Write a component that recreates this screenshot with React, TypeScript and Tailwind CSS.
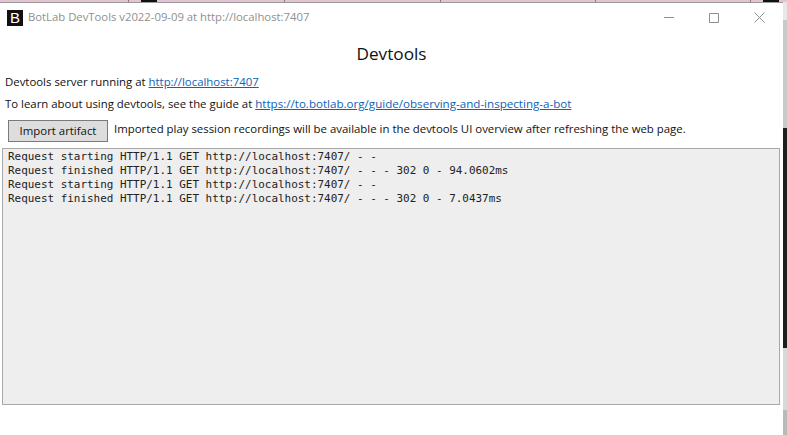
import React from "react";

const logLines = [
  "Request starting HTTP/1.1 GET http://localhost:7407/ - -",
  "Request finished HTTP/1.1 GET http://localhost:7407/ - - - 302 0 - 94.0602ms",
  "Request starting HTTP/1.1 GET http://localhost:7407/ - -",
  "Request finished HTTP/1.1 GET http://localhost:7407/ - - - 302 0 - 7.0437ms",
];

const linkClass = "text-[#0f62b5] underline";

// bits of the window behind this one, showing along the top edge
const TopStrip = () => (
  <div className="flex h-[2px] w-full bg-[#e5c4d2]">
    <div className="h-full w-[129px] border-r border-[#8a7a80]" />
    <div className="h-full w-[12px]" />
    <div className="h-full w-[16px] bg-[#111]" />
    <div className="h-full w-[128px] border-r border-[#8a7a80]" />
    <div className="h-full w-[156px] border-r border-[#8a7a80]" />
    <div className="h-full w-[155px] border-r border-[#8a7a80]" />
    <div className="h-full w-[155px] border-r border-[#8a7a80]" />
    <div className="h-full w-[12px]" />
    <div className="h-full w-[16px] bg-[#111]" />
  </div>
);

const RightStrip = () => (
  <div className="flex h-[433px] w-[4px] flex-col">
    <div className="h-[18px] bg-[#e8e8e8]" />
    <div className="h-[108px] bg-[#c9c9c9]" />
    <div className="h-[220px] bg-[#1e1e1e]" />
    <div className="h-[62px] bg-[#d8d8d8]" />
    <div className="flex-1 bg-[#b9b9b9]" />
  </div>
);

export default function App() {
  return (
    <div className="h-[435px] w-[787px] overflow-hidden bg-white font-['Open_Sans','Noto_Sans',sans-serif] text-[11.4px] text-[#111]">
      <TopStrip />
      <div className="flex">
        <div className="w-[783px] border-t border-[#9a9a9a] bg-white">
          <div className="flex h-[29px] items-center pl-[7px]">
            <div className="flex h-[16px] w-[16px] items-center justify-center bg-[#111] font-['Liberation_Sans',sans-serif] text-[15px] leading-none text-white">
              B
            </div>
            <span className="ml-[5px] text-[11.3px] text-[#8f8f8f]">
              BotLab DevTools v2022-09-09 at http://localhost:7407
            </span>
            <div className="ml-auto flex items-center gap-[35px] pr-[18px]">
              <svg width="10" height="10" viewBox="0 0 10 10" className="text-[#8f8f8f]">
                <path d="M0 4.5H10" stroke="currentColor" fill="none" />
              </svg>
              <svg width="10" height="10" viewBox="0 0 10 10" className="text-[#8f8f8f]">
                <path d="M.5 .5H9.5V9.5H.5Z" stroke="currentColor" fill="none" />
              </svg>
              <svg width="11" height="11" viewBox="0 0 11 11" className="text-[#8f8f8f]">
                <path d="M.5 .5L10.5 10.5M10.5 .5L.5 10.5" stroke="currentColor" fill="none" />
              </svg>
            </div>
          </div>
          <h1 className="mt-[9px] text-center text-[17.2px] leading-[26px] font-normal">Devtools</h1>
          <p className="mt-[6px] pl-[5px] leading-[17px]">
            Devtools server running at <a className={linkClass}>http://localhost:7407</a>
          </p>
          <p className="mt-[5px] pl-[5px] leading-[17px]">
            To learn about using devtools, see the guide at{" "}
            <a className={`${linkClass} text-[11.6px]`}>https://to.botlab.org/guide/observing-and-inspecting-a-bot</a>
          </p>
          <div className="mt-[8px] flex items-start pl-[8px]">
            <button className="h-[22px] w-[100px] border border-[#7a7a7a] bg-[#dddddd] text-[11.4px] leading-none">
              Import artifact
            </button>
            <span className="ml-[6px] leading-[17px]">
              Imported play session recordings will be available in the devtools UI overview after refreshing the web page.
            </span>
          </div>
          <div className="mt-[6px] ml-[2px] h-[257px] w-[778px] border border-[#a9a9a9] bg-[#eeeeee] pt-[1px] pl-[5px] font-['DejaVu_Sans_Mono','Liberation_Mono',monospace] text-[10.95px] leading-[14px] text-[#222]">
            {logLines.map((line, i) => (
              <div key={i} className="whitespace-pre">
                {line}
              </div>
            ))}
          </div>
        </div>
        <RightStrip />
      </div>
    </div>
  );
}
